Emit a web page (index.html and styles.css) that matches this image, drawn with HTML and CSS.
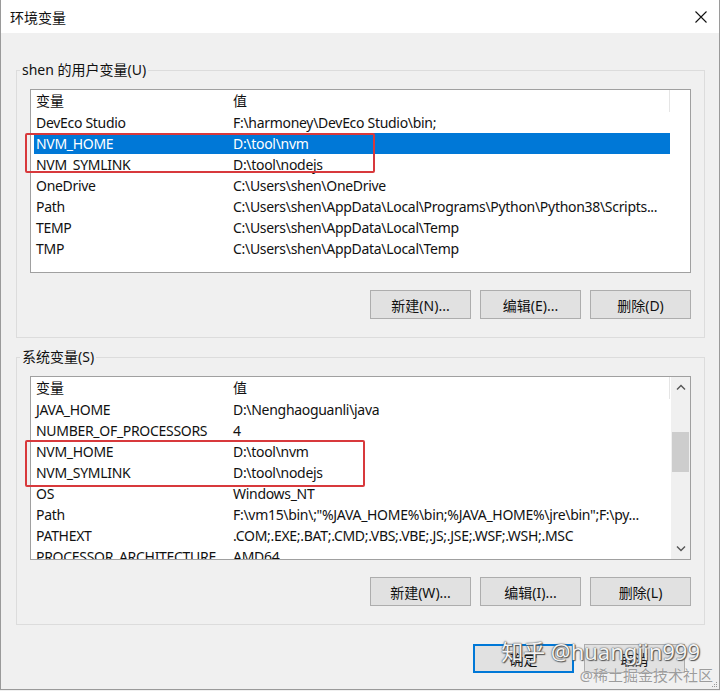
FILE: index.html
```html
<!DOCTYPE html>
<html lang="zh-CN">
<head>
    <meta charset="UTF-8">
    <meta name="viewport" content="width=device-width, initial-scale=1.0">
    <title>环境变量</title>
<link rel="stylesheet" href="styles.css">
</head>
<body>
    <div class="window">
        <div class="titlebar">
            <span class="title">环境变量</span>
            <svg class="close" width="12" height="12" viewBox="0 0 12 12">
                <path d="M0.5 0.5 L11.5 11.5 M11.5 0.5 L0.5 11.5" stroke="#111" stroke-width="1.1" fill="none"/>
            </svg>
        </div>
        <div class="main">
            <fieldset class="group">
                <legend>shen 的用户变量(U)</legend>
                <div class="list">
                    <div class="rows">
                        <div class="row head"><span>变量</span><span>值</span></div>
                        <div class="row"><span>DevEco Studio</span><span>F:\harmoney\DevEco Studio\bin;</span></div>
                        <div class="row selected"><span>NVM_HOME</span><span>D:\tool\nvm</span></div>
                        <div class="row"><span>NVM_SYMLINK</span><span>D:\tool\nodejs</span></div>
                        <div class="row"><span>OneDrive</span><span>C:\Users\shen\OneDrive</span></div>
                        <div class="row"><span>Path</span><span>C:\Users\shen\AppData\Local\Programs\Python\Python38\Scripts...</span></div>
                        <div class="row"><span>TEMP</span><span>C:\Users\shen\AppData\Local\Temp</span></div>
                        <div class="row"><span>TMP</span><span>C:\Users\shen\AppData\Local\Temp</span></div>
                    </div>
                    <div class="mark-box user-mark"></div>
                </div>
                <div class="buttons">
                    <button class="btn">新建(N)...</button>
                    <button class="btn">编辑(E)...</button>
                    <button class="btn">删除(D)</button>
                </div>
            </fieldset>

            <fieldset class="group system">
                <legend>系统变量(S)</legend>
                <div class="list">
                    <div class="rows">
                        <div class="row head"><span>变量</span><span>值</span></div>
                        <div class="row"><span>JAVA_HOME</span><span>D:\Nenghaoguanli\java</span></div>
                        <div class="row"><span>NUMBER_OF_PROCESSORS</span><span>4</span></div>
                        <div class="row"><span>NVM_HOME</span><span>D:\tool\nvm</span></div>
                        <div class="row"><span>NVM_SYMLINK</span><span>D:\tool\nodejs</span></div>
                        <div class="row"><span>OS</span><span>Windows_NT</span></div>
                        <div class="row"><span>Path</span><span>F:\vm15\bin\;"%JAVA_HOME%\bin;%JAVA_HOME%\jre\bin";F:\py...</span></div>
                        <div class="row"><span>PATHEXT</span><span>.COM;.EXE;.BAT;.CMD;.VBS;.VBE;.JS;.JSE;.WSF;.WSH;.MSC</span></div>
                        <div class="row"><span>PROCESSOR_ARCHITECTURE</span><span>AMD64</span></div>
                    </div>
                    <div class="scrollbar">
                        <div class="arrow">
                            <svg width="10" height="6" viewBox="0 0 10 6"><path d="M1 5.5 L5 1.5 L9 5.5" stroke="#555" stroke-width="1.4" fill="none"/></svg>
                        </div>
                        <div class="track"><div class="thumb"></div></div>
                        <div class="arrow">
                            <svg width="10" height="6" viewBox="0 0 10 6"><path d="M1 0.5 L5 4.5 L9 0.5" stroke="#555" stroke-width="1.4" fill="none"/></svg>
                        </div>
                    </div>
                    <div class="mark-box system-mark"></div>
                </div>
                <div class="buttons">
                    <button class="btn">新建(W)...</button>
                    <button class="btn">编辑(I)...</button>
                    <button class="btn">删除(L)</button>
                </div>
            </fieldset>

            <div class="dialog-buttons">
                <button class="btn dialog default">确定</button>
                <button class="btn dialog">取消</button>
            </div>
        </div>

        <div class="watermark">
            <span class="zhihu">知乎 @huangjin999</span>
            <span class="juejin">@稀土掘金技术社区</span>
        </div>
        <svg class="grip" width="7" height="7" viewBox="0 0 7 7">
            <rect x="5" y="1" width="1" height="1" fill="#999"/>
            <rect x="3" y="3" width="1" height="1" fill="#999"/>
            <rect x="5" y="3" width="1" height="1" fill="#999"/>
            <rect x="1" y="5" width="1" height="1" fill="#999"/>
            <rect x="3" y="5" width="1" height="1" fill="#999"/>
            <rect x="5" y="5" width="1" height="1" fill="#999"/>
        </svg>
    </div>
</body>
</html>
```

FILE: styles.css
```css
*{
    margin: 0;
    padding: 0;
    box-sizing: border-box;
}
body{
    width: 720px;
    height: 691px;
    background-color: #f0f0f0;
    font-family: "Noto Sans", "Noto Sans CJK SC", sans-serif;
    font-size: 14px;
    color: #111;
    overflow: hidden;
}
.window{
    position: relative;
    width: 720px;
    height: 690px;
    background-color: #f0f0f0;
    border: 1px solid #9a9a9a;
    border-top: none;
}
.titlebar{
    height: 33px;
    background-color: #fff;
    display: flex;
    align-items: center;
    justify-content: space-between;
    padding: 0 12px 0 9px;
}
.title{
    font-size: 14px;
}
.close{
    margin-top: 1px;
}
.main{
    padding: 27px 14px 0 15px;
}
.group{
    border: 1px solid #dcdcdc;
    padding: 9px 13px 18px 13px;
    min-width: 0;
}
.group legend{
    margin-left: -10px;
    padding: 0 2px;
    line-height: 20px;
}
.system{
    margin-top: 9px;
}

/* list view */
.list{
    position: relative;
    height: 184px;
    background-color: #fff;
    border: 1px solid #a0a0a0;
    display: flex;
}
.rows{
    width: 639px;
    padding-left: 3px;
    overflow: hidden;
}
.row{
    display: grid;
    grid-template-columns: 197px 1fr;
    height: 21px;
    line-height: 21px;
    white-space: nowrap;
    letter-spacing: -0.3px;
}
.row span{
    padding-left: 2px;
    overflow: hidden;
    text-overflow: ellipsis;
}
.row.head{
    height: 22px;
    line-height: 22px;
    letter-spacing: 0;
    border-right: 1px solid #e5e5e5;
}
.row.selected{
    background-color: #0078d7;
    color: #fff;
}

.scrollbar{
    margin-left: auto;
    width: 19px;
    display: flex;
    flex-direction: column;
    background-color: #f0f0f0;
}
.arrow{
    height: 20px;
    display: flex;
    align-items: center;
    justify-content: center;
}
.track{
    flex: 1;
}
.thumb{
    margin: 35px 1px 0;
    height: 40px;
    background-color: #cdcdcd;
}

/* red annotation boxes */
.mark-box{
    position: absolute;
    left: -6px;
    border: 2px solid #d8393c;
    border-radius: 2px;
}
.user-mark{
    top: 43px;
    width: 350px;
    height: 40px;
}
.system-mark{
    top: 63px;
    width: 340px;
    height: 47px;
}

/* buttons */
.buttons{
    display: flex;
    justify-content: flex-end;
    gap: 9px;
    margin-top: 17px;
}
.btn{
    width: 101px;
    height: 29px;
    font-family: "Noto Sans", "Noto Sans CJK SC", sans-serif;
    font-size: 14px;
    color: #111;
    background-color: #e1e1e1;
    border: 1px solid #adadad;
}
.dialog-buttons{
    display: flex;
    justify-content: flex-end;
    gap: 10px;
    margin-top: 19px;
    padding-right: 20px;
}
.btn.dialog{
    width: 101px;
}
.btn.default{
    border: 2px solid #0078d7;
}

/* watermark */
.watermark{
    position: absolute;
    right: 6px;
    bottom: 4px;
    display: flex;
    flex-direction: column;
    align-items: flex-end;
    pointer-events: none;
}
.zhihu{
    font-size: 22px;
    line-height: 28px;
    margin-right: 13px;
    color: rgba(255,255,255,0.95);
    text-shadow: 0 0 1px #444, 0 0 2px #666, 1px 1px 1px #555;
}
.juejin{
    font-size: 15px;
    line-height: 20px;
    color: #9c9c9c;
    text-shadow: 0 0 1px #fff;
}
.grip{
    position: absolute;
    right: 1px;
    bottom: 1px;
}
```
